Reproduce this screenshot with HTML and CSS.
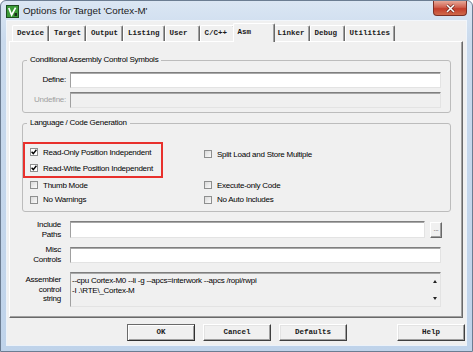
FILE: index.html
```html
<!DOCTYPE html>
<html lang="en">
<head>
    <meta charset="UTF-8">
    <title>Options for Target 'Cortex-M'</title>
    <link rel="stylesheet" href="styles.css">
</head>
<body>

<div class="window">
    <div class="titlebar">
        <svg class="app-icon" width="13" height="13" viewBox="0 0 13 13">
            <rect x="0.5" y="0.5" width="12" height="12" fill="#3b9a38" stroke="#1d4d1f"/>
            <path d="M2.8 3 L5.6 10 L9.6 2.6" stroke="#fff" stroke-width="1.7" fill="none"/>
            <rect x="8.5" y="8" width="2.5" height="3" fill="#1c2a1c"/>
        </svg>
        <span class="title">Options for Target 'Cortex-M'</span>
        <div class="close-btn">
            <svg width="11" height="9" viewBox="0 0 11 9">
                <path d="M2 1 L9 8 M9 1 L2 8" stroke="#5a1a12" stroke-width="2.6"/>
                <path d="M2 1 L9 8 M9 1 L2 8" stroke="#fff" stroke-width="1.6"/>
            </svg>
        </div>
    </div>

    <div class="client">
        <div class="tabs">
            <span class="tab">Device</span>
            <span class="tab">Target</span>
            <span class="tab">Output</span>
            <span class="tab">Listing</span>
            <span class="tab">User</span>
            <span class="tab">C/C++</span>
            <span class="tab active">Asm</span>
            <span class="tab">Linker</span>
            <span class="tab">Debug</span>
            <span class="tab">Utilities</span>
        </div>

        <div class="panel">
            <fieldset class="group">
                <legend>Conditional Assembly Control Symbols</legend>
                <div class="rows">
                    <div class="field-row">
                        <label class="field-label short">Define:</label>
                        <div class="edit"></div>
                    </div>
                    <div class="field-row">
                        <label class="field-label short disabled">Undefine:</label>
                        <div class="edit disabled"></div>
                    </div>
                </div>
            </fieldset>

            <fieldset class="group lang">
                <legend>Language / Code Generation</legend>
                <div class="options">
                    <div class="highlight">
                        <div class="check"><span class="box checked"></span>Read-Only Position Independent</div>
                        <div class="check"><span class="box checked"></span>Read-Write Position Independent</div>
                    </div>
                    <div class="check right first"><span class="box"></span>Split Load and Store Multiple</div>
                    <div class="check row3"><span class="box"></span>Thumb Mode</div>
                    <div class="check right row3"><span class="box"></span>Execute-only Code</div>
                    <div class="check row4"><span class="box"></span>No Warnings</div>
                    <div class="check right row4"><span class="box"></span>No Auto Includes</div>
                </div>
            </fieldset>

            <div class="field-row include">
                <label class="field-label">Include<br>Paths</label>
                <div class="edit"></div>
                <div class="browse">...</div>
            </div>
            <div class="field-row misc">
                <label class="field-label">Misc<br>Controls</label>
                <div class="edit"></div>
            </div>
            <div class="field-row asm">
                <label class="field-label">Assembler<br>control<br>string</label>
                <div class="asm-box">
                    <div class="asm-text">--cpu Cortex-M0 --li -g --apcs=interwork --apcs /ropi/rwpi<br>-I .\RTE\_Cortex-M</div>
                    <div class="scroll">
                        <span class="arrow up"></span>
                        <span class="arrow down"></span>
                    </div>
                </div>
            </div>
        </div>

        <div class="buttons">
            <span class="btn default">OK</span>
            <span class="btn">Cancel</span>
            <span class="btn">Defaults</span>
            <span class="btn help">Help</span>
        </div>
    </div>
</div>

</body>
</html>
```

FILE: styles.css
```css
* {
    box-sizing: border-box;
}

body {
    margin: 0;
    background: #fff;
    font-family: "Liberation Sans", Arial, sans-serif;
}

.window {
    width: 473px;
    height: 352px;
    display: flex;
    flex-direction: column;
    background: linear-gradient(#dbe6f3, #c9daed 40px, #bfd3ea);
    border: 1px solid #6c7d92;
    border-radius: 6px 6px 0 0;
}

.titlebar {
    height: 20px;
    display: flex;
    align-items: flex-start;
}

.app-icon {
    margin: 4px 0 0 5px;
}

.title {
    margin: 3px 0 0 4px;
    font-size: 9.8px;
    line-height: 14px;
    color: #1b1b1b;
}

.close-btn {
    margin-left: auto;
    margin-right: 5px;
    width: 34px;
    height: 15px;
    display: flex;
    align-items: center;
    justify-content: center;
    border: 1px solid #7b3026;
    border-top: none;
    border-radius: 0 0 4px 4px;
    background: linear-gradient(#e7a898, #d0614f 45%, #c33d2b 55%, #cf6a4c);
}

.client {
    flex: 1;
    margin: 0 6px 6px;
    padding: 4px 0 0 2px;
    background: #f0f0f0;
    box-shadow: 0 0 0 1px rgba(255, 255, 255, 0.7);
}

/* tab strip */
.tabs {
    height: 16px;
    display: flex;
    align-items: flex-end;
    padding-left: 3px;
}

.tab {
    height: 16px;
    min-width: 35px;
    padding: 0 4px;
    font-family: "Liberation Mono", monospace;
    font-size: 7.5px;
    font-weight: bold;
    line-height: 14px;
    color: #1a1a1a;
    border-top: 1px solid #fff;
    border-left: 1px solid #fff;
    border-right: 1px solid #696969;
    box-shadow: inset -1px 0 #a0a0a0;
    border-radius: 2px 2px 0 0;
    white-space: nowrap;
}

.tab.active {
    position: relative;
    z-index: 1;
    height: 19px;
    min-width: 42px;
    margin: 0 -2px -1px;
    background: #f0f0f0;
    line-height: 16px;
}

/* page */
.panel {
    height: 277px;
    margin-right: 3px;
    padding: 13px 11px 0 12px;
    border: 1px solid;
    border-color: #fff #696969 #696969 #fff;
    box-shadow: inset -1px -1px #a0a0a0;
}

.group {
    margin: 0;
    padding: 7px 9px 4px 0;
    border: 1px solid #bcbcbc;
    border-radius: 3px;
    font-size: 8px;
    letter-spacing: -0.25px;
}

.group legend {
    margin-left: 4px;
    padding: 0 3px;
    line-height: 10px;
    color: #000;
}

.rows {
    display: flex;
    flex-direction: column;
    gap: 4px;
}

.field-row {
    display: flex;
    align-items: center;
    font-size: 8px;
    letter-spacing: -0.25px;
}

.field-label {
    width: 39px;
    margin-right: 9px;
    text-align: right;
    line-height: 9.5px;
    color: #000;
    white-space: nowrap;
}

.field-label.short {
    width: 43px;
    margin-right: 4px;
}

.field-label.disabled {
    color: #a0a0a0;
}

.edit {
    flex: 1;
    height: 16px;
    background: #fff;
    border: 1px solid;
    border-color: #7f7f7f #e3e3e3 #e3e3e3 #a0a0a0;
    box-shadow: inset 0 1px #a8a8a8;
}

.edit.disabled {
    background: #f0f0f0;
}

/* language / code generation */
.lang {
    margin-top: 5px;
    padding: 14px 0 4px 0;
}

.options {
    display: grid;
    grid-template-columns: 174px 1fr;
    grid-template-rows: 18px 18px 14px 15px;
}

.highlight {
    grid-row: 1 / span 2;
    grid-column: 1;
    width: 140px;
    padding-left: 5px;
    border: 2px solid #e8302c;
}

.highlight .check {
    height: 16px;
    padding-left: 0;
}

.check {
    display: flex;
    align-items: center;
    padding-left: 7px;
    white-space: nowrap;
    color: #000;
    grid-column: 1;
}

.check.right {
    grid-column: 2;
}

.check.first {
    grid-row: 1;
    height: 16px;
    margin-top: 4px;
}

.check.row3 {
    grid-row: 3;
}

.check.row4 {
    grid-row: 4;
}

.box {
    width: 8px;
    height: 8px;
    margin-right: 5px;
    flex-shrink: 0;
    border: 1px solid #8e8f8f;
    background: linear-gradient(135deg, #d9d9d9, #fbfbfb);
}

.box.checked {
    background: #fff url("data:image/svg+xml;utf8,<svg xmlns='http://www.w3.org/2000/svg' width='6' height='6' viewBox='0 0 6 6'><path d='M0.6 2.8 L2.3 4.6 L5.4 0.8' stroke='black' stroke-width='1.4' fill='none'/></svg>") center / 6px 6px no-repeat;
}

/* lower edits */
.include {
    margin-top: 8px;
}

.include .edit {
    height: 17px;
}

.browse {
    width: 12px;
    height: 16px;
    margin: 0 9px 0 5px;
    font-size: 7px;
    line-height: 12px;
    text-align: center;
    color: #555;
    border: 1px solid;
    border-color: #fff #696969 #696969 #fff;
    box-shadow: inset -1px -1px #a0a0a0;
}

.misc {
    margin-top: 6px;
    padding-right: 10px;
}

.asm {
    margin-top: 8px;
    padding-right: 10px;
}

.asm-box {
    flex: 1;
    height: 35px;
    display: flex;
    background: #f0f0f0;
    border: 1px solid;
    border-color: #7f7f7f #e3e3e3 #e3e3e3 #a0a0a0;
    box-shadow: inset 0 1px #a8a8a8;
}

.asm-text {
    flex: 1;
    padding: 3px 0 0 1px;
    line-height: 9.5px;
    white-space: nowrap;
    color: #000;
}

.scroll {
    width: 11px;
    display: flex;
    flex-direction: column;
    justify-content: space-between;
    align-items: center;
    padding: 7px 0 6px;
}

.arrow {
    width: 0;
    height: 0;
    border-left: 2.5px solid transparent;
    border-right: 2.5px solid transparent;
}

.arrow.up {
    border-bottom: 3px solid #222;
}

.arrow.down {
    border-top: 3px solid #222;
}

/* dialog buttons */
.buttons {
    display: flex;
    gap: 8px;
    margin-top: 6px;
    padding: 0 1px 0 118px;
}

.btn {
    width: 68px;
    height: 17px;
    font-family: "Liberation Mono", monospace;
    font-size: 7.5px;
    font-weight: bold;
    line-height: 15px;
    text-align: center;
    color: #1a1a1a;
    border: 1px solid;
    border-color: #fff #404040 #404040 #fff;
    box-shadow: inset -1px -1px #a0a0a0, inset 1px 1px #e3e3e3;
}

.btn.default {
    border-color: #6a6a6a #303030 #303030 #6a6a6a;
    box-shadow: inset 1px 1px #fff, inset -1px -1px #a0a0a0;
}

.btn.help {
    margin-left: auto;
}
```
